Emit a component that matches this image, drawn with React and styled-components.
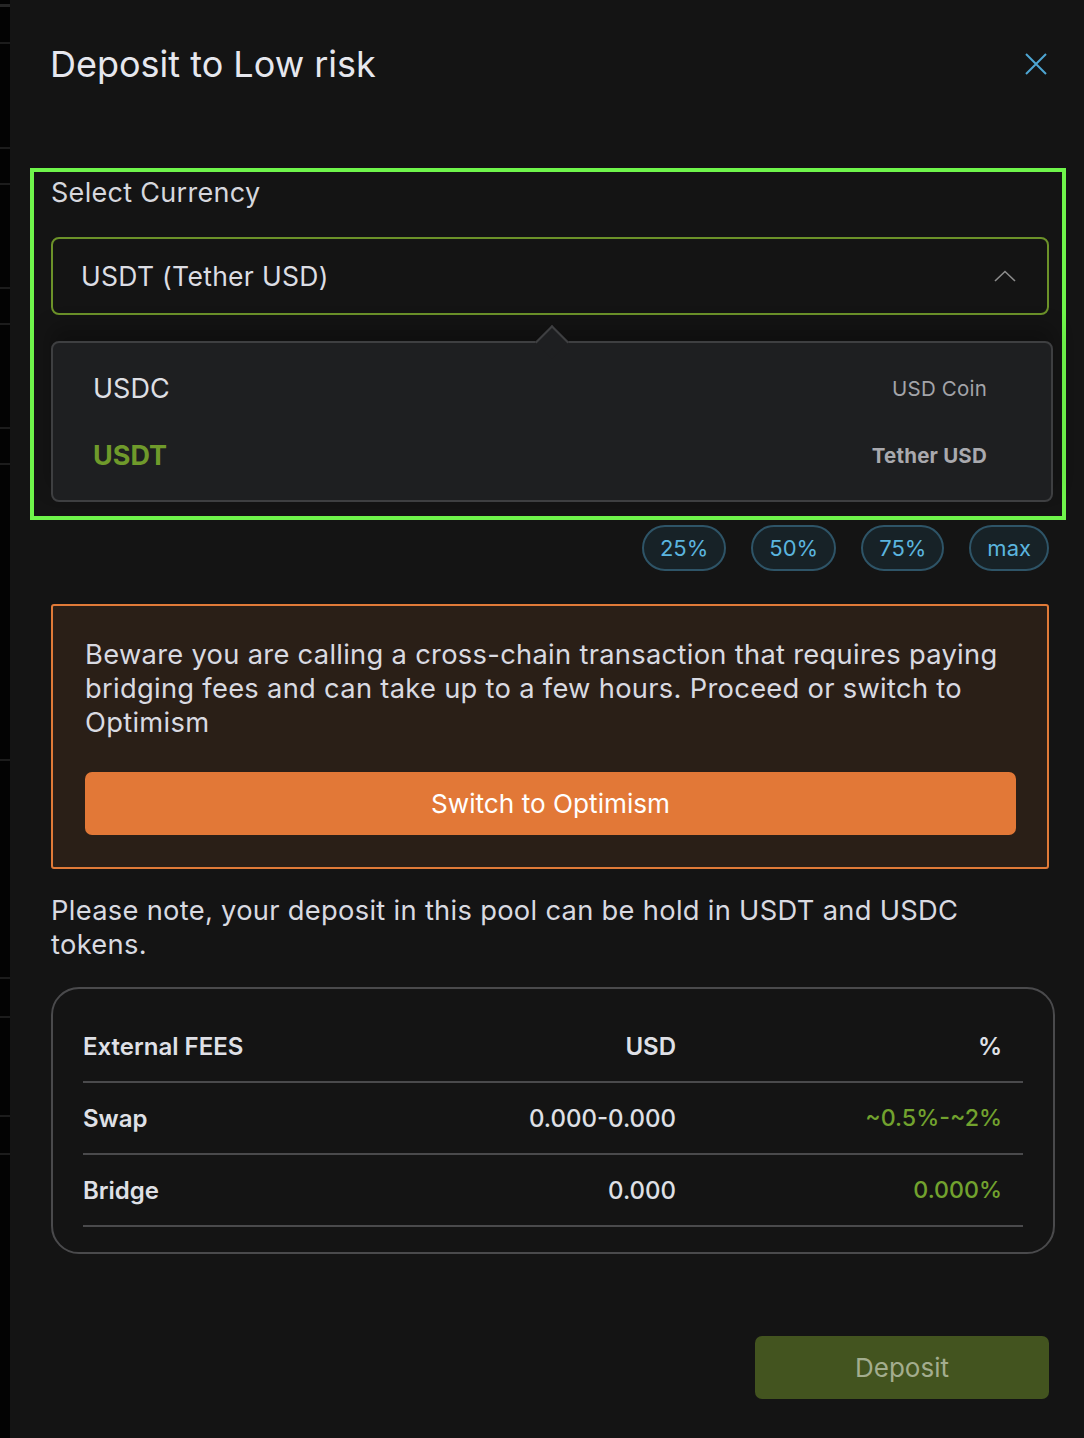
import React from 'react';
import styled, { createGlobalStyle } from 'styled-components';

const GlobalStyle = createGlobalStyle`
  html, body {
    margin: 0;
    padding: 0;
    background: #030303;
  }
  * {
    box-sizing: border-box;
  }
  body {
    font-family: Inter, "Noto Sans", "Liberation Sans", sans-serif;
    -webkit-font-smoothing: antialiased;
  }
`;

const stripRows = [37, 105, 36, 104, 36, 104, 36, 296, 218, 39, 99, 38, 285];

const fees = [
  { name: 'Swap', usd: '0.000-0.000', pct: '~0.5%-~2%' },
  { name: 'Bridge', usd: '0.000', pct: '0.000%' },
];

const currencies = [
  { code: 'USDC', name: 'USD Coin', active: false },
  { code: 'USDT', name: 'Tether USD', active: true },
];

export default function App() {
  return (
    <Page>
      <GlobalStyle />
      <BackStrip>
        {stripRows.map((h, i) => (
          <StripRow key={i} style={{ height: h }} />
        ))}
      </BackStrip>
      <Panel>
        <Header>
          <Title>Deposit to Low risk</Title>
          <CloseButton aria-label="close">
            <svg width="22" height="22" viewBox="0 0 22 22">
              <path d="M1 1L21 21M21 1L1 21" stroke="#4ea6d3" strokeWidth="2" fill="none" />
            </svg>
          </CloseButton>
        </Header>

        <Highlight>
          <Label>Select Currency</Label>
          <SelectBox>
            <span>USDT (Tether USD)</span>
            <svg width="22" height="12" viewBox="0 0 22 12">
              <path d="M1 11L11 1.5L21 11" stroke="#8c8c8c" strokeWidth="1.6" fill="none" />
            </svg>
          </SelectBox>
          <Dropdown>
            {currencies.map(c => (
              <Option key={c.code}>
                <OptionCode $active={c.active}>{c.code}</OptionCode>
                <OptionName $active={c.active}>{c.name}</OptionName>
              </Option>
            ))}
          </Dropdown>
        </Highlight>

        <Pills>
          {['25%', '50%', '75%', 'max'].map(p => (
            <Pill key={p}>{p}</Pill>
          ))}
        </Pills>

        <Warning>
          <WarningText>
            Beware you are calling a cross-chain transaction that requires paying bridging fees and can
            take up to a few hours. Proceed or switch to Optimism
          </WarningText>
          <SwitchButton>Switch to Optimism</SwitchButton>
        </Warning>

        <Note>Please note, your deposit in this pool can be hold in USDT and USDC tokens.</Note>

        <FeesCard>
          <FeeRow>
            <Cell>External FEES</Cell>
            <Cell $right>USD</Cell>
            <Cell $right>%</Cell>
          </FeeRow>
          {fees.map(f => (
            <FeeRow key={f.name}>
              <Cell>{f.name}</Cell>
              <Cell $right $value>{f.usd}</Cell>
              <Cell $right $green>{f.pct}</Cell>
            </FeeRow>
          ))}
        </FeesCard>

        <Footer>
          <DepositButton>Deposit</DepositButton>
        </Footer>
      </Panel>
    </Page>
  );
}

const Page = styled.div`
  display: flex;
  width: 1084px;
  min-height: 1438px;
  overflow: hidden;
`;

const BackStrip = styled.div`
  width: 10px;
  flex-shrink: 0;
  background: #030303;
  border-top: 3px solid #262626;
  margin-top: 4px;
`;

const StripRow = styled.div`
  border-bottom: 2px solid #1c1c1c;
`;

const Panel = styled.div`
  flex: 1;
  background: #141414;
  padding: 38px 35px 38px 41px;
  display: flex;
  flex-direction: column;
`;

const Header = styled.div`
  display: flex;
  align-items: center;
  justify-content: space-between;
  height: 52px;
`;

const Title = styled.h1`
  margin: 0 0 0 -1px;
  font-size: 36px;
  font-weight: 400;
  color: #e6e7ee;
`;

const CloseButton = styled.button`
  background: none;
  border: none;
  padding: 0;
  margin-right: 2px;
  display: flex;
  cursor: pointer;
`;

const Highlight = styled.div`
  margin: 78px -17px 0 -21px;
  padding: 4px 13px 14px 17px;
  border: 4px solid #6ff54b;
`;

const Label = styled.div`
  font-size: 27px;
  color: #d6d7dd;
  line-height: 34px;
  letter-spacing: 0.3px;
`;

const SelectBox = styled.div`
  margin-top: 27px;
  height: 78px;
  border: 2px solid #6c9229;
  border-radius: 8px;
  display: flex;
  align-items: center;
  justify-content: space-between;
  padding: 0 31px 0 28px;
  font-size: 26.5px;
  color: #dcdde3;
  letter-spacing: 0.3px;
`;

const Dropdown = styled.div`
  position: relative;
  margin: 26px -4px 0 0;
  background: #1e1f21;
  border: 2px solid #3e3f41;
  border-radius: 8px;
  padding: 12px 64px 11px 40px;
  box-shadow: 0 -14px 20px rgba(0, 0, 0, 0.25);

  &::before {
    content: '';
    position: absolute;
    top: -13px;
    left: 487px;
    width: 22px;
    height: 22px;
    background: #1e1f21;
    border-top: 2px solid #3e3f41;
    border-left: 2px solid #3e3f41;
    transform: rotate(45deg);
  }
`;

const Option = styled.div`
  display: flex;
  align-items: center;
  justify-content: space-between;
  height: 67px;
`;

const OptionCode = styled.span`
  font-size: 27px;
  font-weight: ${p => (p.$active ? 700 : 400)};
  color: ${p => (p.$active ? '#6f9a2b' : '#dedfe4')};
`;

const OptionName = styled.span`
  font-size: 20.5px;
  letter-spacing: 0.2px;
  font-weight: ${p => (p.$active ? 700 : 400)};
  color: ${p => (p.$active ? '#a9a9ae' : '#a3a4a9')};
`;

const Pills = styled.div`
  display: flex;
  justify-content: flex-end;
  gap: 25px;
  margin-top: 5px;
`;

const Pill = styled.div`
  height: 46px;
  padding: 0 16px;
  border: 2px solid #2e5467;
  background: #172227;
  border-radius: 23px;
  display: flex;
  align-items: center;
  justify-content: center;
  font-size: 22px;
  color: #5bb5df;
`;

const Warning = styled.div`
  margin-top: 33px;
  border: 2px solid #e07a38;
  background: #2a1f17;
  border-radius: 3px;
  padding: 32px 31px 32px 32px;
`;

const WarningText = styled.p`
  margin: 0;
  font-size: 27.3px;
  line-height: 34px;
  color: #d9dae1;
  letter-spacing: 0.3px;
`;

const SwitchButton = styled.button`
  display: block;
  width: 100%;
  height: 63px;
  margin-top: 32px;
  border: none;
  border-radius: 7px;
  background: #e27837;
  color: #ffffff;
  font-family: inherit;
  font-size: 26.2px;
  cursor: pointer;
`;

const Note = styled.p`
  margin: 25px 0 0;
  font-size: 27.3px;
  line-height: 34px;
  color: #d9dae1;
  letter-spacing: 0.3px;
`;

const FeesCard = styled.div`
  margin: 25px -6px 0 0;
  border: 2px solid #4a4a4c;
  border-radius: 28px;
  padding: 22px 30px 25px 30px;
`;

const FeeRow = styled.div`
  display: grid;
  grid-template-columns: 1fr 260px 326px;
  align-items: center;
  height: 72px;
  padding-right: 21px;
  border-bottom: 2px solid #4a4a4c;
`;

const Cell = styled.div`
  font-size: ${p => (p.$green ? '23.2px' : '24px')};
  text-align: ${p => (p.$right ? 'right' : 'left')};
  color: ${p => (p.$green ? '#72a22e' : '#dfe0e6')};
  font-weight: ${p => (p.$value || p.$green ? 500 : 600)};
`;

const Footer = styled.div`
  display: flex;
  justify-content: flex-end;
  margin-top: 82px;
`;

const DepositButton = styled.button`
  width: 294px;
  height: 63px;
  border: none;
  border-radius: 7px;
  background: #43541f;
  color: #a3ad8e;
  font-family: inherit;
  font-size: 26px;
  cursor: pointer;
`;
